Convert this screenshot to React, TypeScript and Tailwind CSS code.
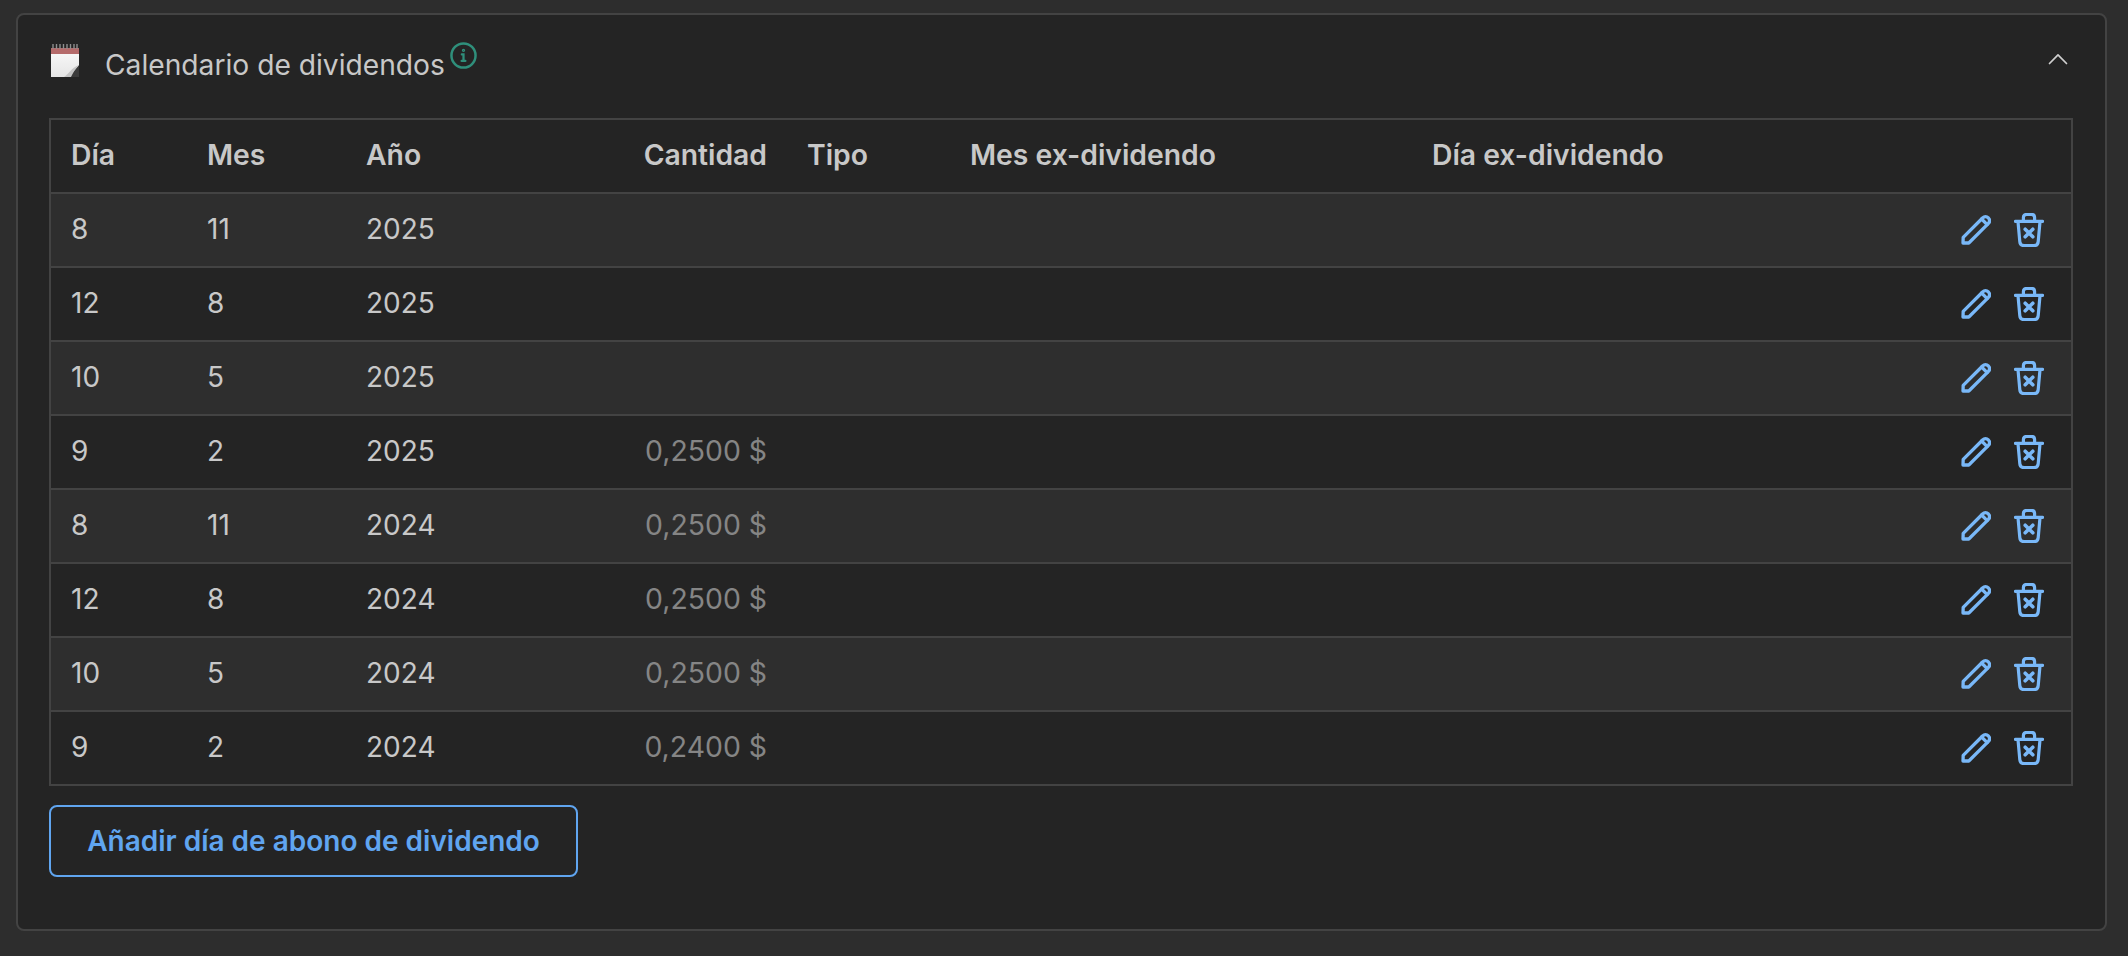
import React from "react";

const rows = [
  ["8", "11", "2025", ""],
  ["12", "8", "2025", ""],
  ["10", "5", "2025", ""],
  ["9", "2", "2025", "0,2500 $"],
  ["8", "11", "2024", "0,2500 $"],
  ["12", "8", "2024", "0,2500 $"],
  ["10", "5", "2024", "0,2500 $"],
  ["9", "2", "2024", "0,2400 $"],
];

function CalendarIcon() {
  return (
    <svg width="28" height="33" viewBox="0 0 28 33" className="shrink-0">
      <defs>
        <linearGradient id="pg" x1="0" y1="0" x2="0" y2="1">
          <stop offset="0" stopColor="#fafafa" />
          <stop offset="1" stopColor="#e6e6e6" />
        </linearGradient>
      </defs>
      <rect x="0" y="4" width="28" height="29" fill="url(#pg)" />
      <rect x="0" y="4" width="28" height="6" fill="#b56b6b" />
      <g stroke="#8f8f8f" strokeWidth="1.4">
        {[2, 5.5, 9, 12.5, 16, 19.5, 23, 26].map((x) => (
          <line key={x} x1={x} y1="0" x2={x} y2="5" />
        ))}
      </g>
      <path d="M15 33 C19 32 23 27 28 21 L28 33 Z" fill="#3a3a3a" />
      <path d="M13 33 C18 30 20 24 28 21 C24 25 22 29 20 33 Z" fill="#c4c4c4" />
    </svg>
  );
}

function InfoIcon() {
  return (
    <svg width="27" height="27" viewBox="0 0 26 26" fill="none" stroke="#2f8f7b" strokeWidth="2.4" strokeLinecap="round" className="shrink-0">
      <circle cx="13" cy="13" r="11.6" />
      <circle cx="13" cy="8" r="0.6" strokeWidth="2" />
      <path d="M11.4 12 H13 V18 M11.2 18.2 H14.8" strokeWidth="2.2" />
    </svg>
  );
}

function PencilIcon() {
  return (
    <svg width="30" height="30" viewBox="0 0 30 30" fill="none" stroke="#79b8f8" strokeWidth="3.3" strokeLinecap="round" strokeLinejoin="round" className="shrink-0">
      <path d="M2 28 L2.2 22.4 L21.6 3 C23.4 1.2 25.6 1.2 27.4 3 C29 4.8 29 6.8 27.2 8.6 L7.8 28 Z" />
      <path d="M20.6 4 L26.2 9.6" />
    </svg>
  );
}

function TrashIcon() {
  return (
    <svg width="30" height="34" viewBox="0 0 30 34" fill="none" stroke="#79b8f8" strokeWidth="3.2" strokeLinecap="round" strokeLinejoin="round" className="shrink-0">
      <path d="M1.4 8.4 H28.6" />
      <path d="M9.4 8 V4.6 C9.4 2.6 10.6 1.4 12.6 1.4 H17.4 C19.4 1.4 20.6 2.6 20.6 4.6 V8" />
      <path d="M4 8.6 L5.8 28.6 C6 31.2 7.6 32.6 10 32.6 H20 C22.4 32.6 24 31.2 24.2 28.6 L26 8.6" />
      <path d="M11.2 16.2 L18.8 23.8 M18.8 16.2 L11.2 23.8" strokeWidth="3.6" />
    </svg>
  );
}

function ChevronUp() {
  return (
    <svg width="20" height="12" viewBox="0 0 20 12" fill="none" stroke="#cfcfcf" strokeWidth="1.7" strokeLinecap="round" strokeLinejoin="round">
      <path d="M1.5 10.5 L10 1.8 L18.5 10.5" />
    </svg>
  );
}

export default function App() {
  return (
    <div className="h-[956px] overflow-hidden bg-[#2d2d2d] pt-[13px] pl-[16px] pr-[21px] text-[#c8c8c8] [font-family:Inter,sans-serif]">
      <section className="h-[918px] rounded-[8px] border-2 border-[#434343] bg-[#242424] pl-[31px] pr-[32px]">
        <header className="flex h-[103px] items-start pt-[28px]">
          <div className="ml-[2px] mt-[1px]"><CalendarIcon /></div>
          <h2 className="ml-[26px] mt-[4px] text-[28.2px] leading-[36px] font-normal">Calendario de dividendos</h2>
          <div className="ml-[5px] -mt-[1px]"><InfoIcon /></div>
          <div className="ml-auto mr-[5px] mt-[10px]"><ChevronUp /></div>
        </header>

        <table className="w-full table-fixed border-collapse border-2 border-[#434343] text-[28px]">
          <colgroup>
            <col className="w-[137px]" />
            <col className="w-[159px]" />
            <col className="w-[274px]" />
            <col className="w-[167px]" />
            <col className="w-[163px]" />
            <col className="w-[462px]" />
            <col className="w-[461px]" />
            <col />
          </colgroup>
          <thead>
            <tr className="h-[74px] text-left text-[28.3px]">
              <th className="pl-[20px] pb-[2px] font-semibold">Día</th>
              <th className="pl-[20px] pb-[2px] font-semibold">Mes</th>
              <th className="pl-[20px] pb-[2px] font-semibold">Año</th>
              <th className="pr-[20px] pb-[2px] text-right font-semibold">Cantidad</th>
              <th className="pl-[20px] pb-[2px] font-semibold">Tipo</th>
              <th className="pl-[20px] pb-[2px] font-semibold">Mes ex-dividendo</th>
              <th className="pl-[20px] pb-[2px] font-semibold">Día ex-dividendo</th>
              <th />
            </tr>
          </thead>
          <tbody>
            {rows.map((r, i) => (
              <tr key={i} className={`h-[74px] border-t-2 border-[#434343] ${i % 2 === 0 ? "bg-[#2e2e2e]" : "bg-[#242424]"}`}>
                <td className="pl-[20px] pb-[2px]">{r[0]}</td>
                <td className="pl-[20px] pb-[2px]">{r[1]}</td>
                <td className="pl-[20px] pb-[2px]">{r[2]}</td>
                <td className="pr-[20px] pb-[2px] text-right text-[28.4px] text-[#858585]">{r[3]}</td>
                <td />
                <td />
                <td />
                <td className="pr-[27px]">
                  <div className="flex items-center justify-end gap-[23px]">
                    <PencilIcon />
                    <TrashIcon />
                  </div>
                </td>
              </tr>
            ))}
          </tbody>
        </table>

        <button className="mt-[19px] h-[72px] w-[529px] rounded-[8px] border-2 border-[#60a5f0] text-[28px] font-semibold text-[#60a5f0]">
          Añadir día de abono de dividendo
        </button>
      </section>
    </div>
  );
}
